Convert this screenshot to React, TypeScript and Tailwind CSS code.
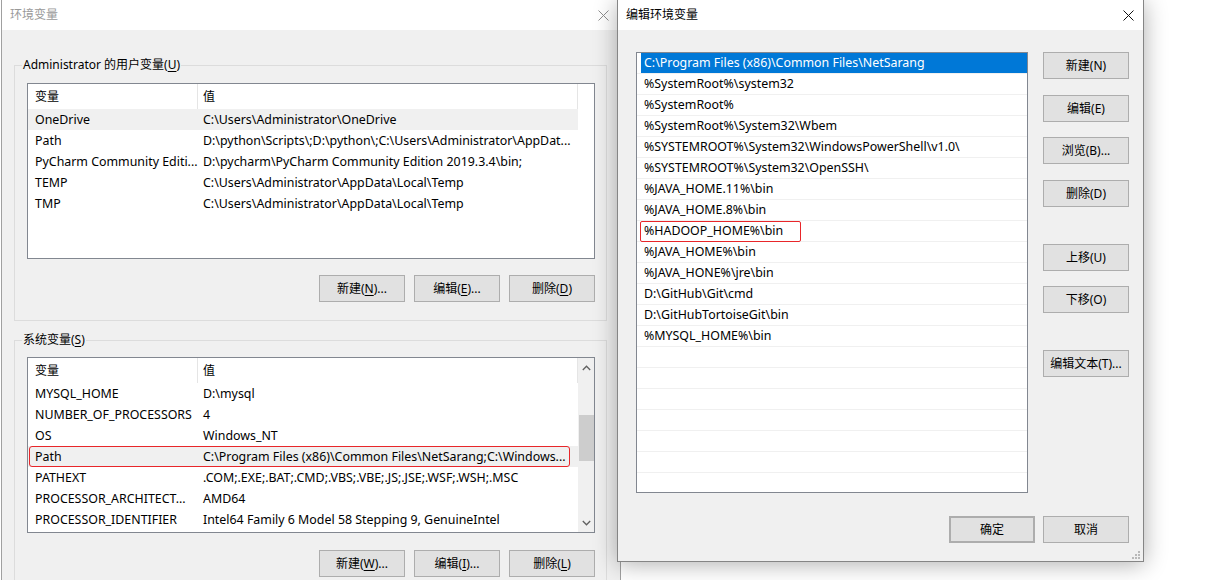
import React from "react";

const F = "font-['Noto_Sans','Noto_Sans_CJK_SC',sans-serif]";

function U({ children }: { children: React.ReactNode }) {
  return <span className="underline underline-offset-[2px] decoration-[1px]">{children}</span>;
}

function Btn({ children, className = "" }: { children: React.ReactNode; className?: string }) {
  return (
    <div
      className={`h-[27px] w-[86px] shrink-0 bg-[#e1e1e1] border border-[#adadad] flex items-center justify-center text-[12px] text-black ${className}`}
    >
      {children}
    </div>
  );
}

function CloseX({ color }: { color: string }) {
  return (
    <svg width="11" height="11" viewBox="0 0 11 11">
      <path d="M0.5 0.5 L10.5 10.5 M10.5 0.5 L0.5 10.5" stroke={color} strokeWidth="1" fill="none" />
    </svg>
  );
}

function Chevron({ up }: { up?: boolean }) {
  return (
    <svg width="9" height="6" viewBox="0 0 9 6">
      <path d={up ? "M0.8 5 L4.5 1.2 L8.2 5" : "M0.8 1 L4.5 4.8 L8.2 1"} stroke="#606060" strokeWidth="1.3" fill="none" />
    </svg>
  );
}

type Row = { n: string; v: string; hl?: boolean; red?: boolean };

function VarList({ rows, scroll }: { rows: Row[]; scroll?: boolean }) {
  return (
    <div className="w-[568px] h-[176px] border border-[#828790] bg-white flex overflow-hidden text-[12.4px] text-black">
      <div className="w-[550px] flex flex-col">
        <div className="h-[25px] flex shrink-0 text-[12px]">
          <div className="w-[170px] border-r border-[#e5e5e5] pl-[7px] pt-[1px] flex items-center">变量</div>
          <div className="w-[380px] border-r border-[#e5e5e5] pl-[5px] pt-[1px] flex items-center">值</div>
        </div>
        {rows.map((r, i) => (
          <div key={i} className={`relative h-[21px] flex items-center shrink-0 pt-[1px] ${r.hl ? "bg-[#f0f0f0]" : ""}`}>
            <div className="w-[170px] pl-[7px] whitespace-nowrap overflow-hidden">{r.n}</div>
            <div className="w-[380px] pl-[5px] whitespace-nowrap overflow-hidden">{r.v}</div>
            {r.red && (
              <div className="absolute left-[1px] right-[8px] top-0 bottom-0 border border-[#e8262a] rounded-[3px]" />
            )}
          </div>
        ))}
      </div>
      {scroll ? (
        <div className="w-[16px] bg-[#f0f0f0] flex flex-col items-center">
          <div className="h-[20px] flex items-center justify-center">
            <Chevron up />
          </div>
          <div className="mt-[37px] h-[46px] w-[15px] bg-[#cdcdcd]" />
          <div className="flex-1" />
          <div className="h-[18px] flex items-center justify-center">
            <Chevron />
          </div>
        </div>
      ) : (
        <div className="w-[16px]" />
      )}
    </div>
  );
}

const userRows: Row[] = [
  { n: "OneDrive", v: "C:\\Users\\Administrator\\OneDrive", hl: true },
  { n: "Path", v: "D:\\python\\Scripts\\;D:\\python\\;C:\\Users\\Administrator\\AppDat..." },
  { n: "PyCharm Community Editi...", v: "D:\\pycharm\\PyCharm Community Edition 2019.3.4\\bin;" },
  { n: "TEMP", v: "C:\\Users\\Administrator\\AppData\\Local\\Temp" },
  { n: "TMP", v: "C:\\Users\\Administrator\\AppData\\Local\\Temp" },
];

const sysRows: Row[] = [
  { n: "MYSQL_HOME", v: "D:\\mysql" },
  { n: "NUMBER_OF_PROCESSORS", v: "4" },
  { n: "OS", v: "Windows_NT" },
  { n: "Path", v: "C:\\Program Files (x86)\\Common Files\\NetSarang;C:\\Windows...", hl: true, red: true },
  { n: "PATHEXT", v: ".COM;.EXE;.BAT;.CMD;.VBS;.VBE;.JS;.JSE;.WSF;.WSH;.MSC" },
  { n: "PROCESSOR_ARCHITECT...", v: "AMD64" },
  { n: "PROCESSOR_IDENTIFIER", v: "Intel64 Family 6 Model 58 Stepping 9, GenuineIntel" },
];

const pathItems = [
  "C:\\Program Files (x86)\\Common Files\\NetSarang",
  "%SystemRoot%\\system32",
  "%SystemRoot%",
  "%SystemRoot%\\System32\\Wbem",
  "%SYSTEMROOT%\\System32\\WindowsPowerShell\\v1.0\\",
  "%SYSTEMROOT%\\System32\\OpenSSH\\",
  "%JAVA_HOME.11%\\bin",
  "%JAVA_HOME.8%\\bin",
  "%HADOOP_HOME%\\bin",
  "%JAVA_HOME%\\bin",
  "%JAVA_HONE%\\jre\\bin",
  "D:\\GitHub\\Git\\cmd",
  "D:\\GitHubTortoiseGit\\bin",
  "%MYSQL_HOME%\\bin",
];

function GroupBox({ label, children, className = "" }: { label: React.ReactNode; children: React.ReactNode; className?: string }) {
  return (
    <div className={`relative w-[593px] border border-[#dcdcdc] pl-[12px] pr-[10px] ${className}`}>
      <div className="absolute -top-[10px] left-[7px] bg-[#f0f0f0] px-[1px] text-[12px] text-black leading-[18px] whitespace-nowrap">
        {label}
      </div>
      {children}
    </div>
  );
}

export default function App() {
  const rows = Array.from({ length: 21 }, (_, i) => pathItems[i] ?? "");
  return (
    <div className={`relative w-[1222px] h-[580px] bg-white overflow-hidden ${F}`}>
      {/* Left window: 环境变量 */}
      <div className="absolute left-[1px] top-0 w-[620px] h-[620px] bg-[#f0f0f0] border-l border-r border-[#a0a0a0]">
        <div className="h-[30px] bg-white flex items-center justify-between pl-[8px] pr-[11px]">
          <span className="text-[12px] text-[#999999]">环境变量</span>
          <CloseX color="#8e8e8e" />
        </div>
        <div className="pl-[12px]">
          <GroupBox
            className="mt-[35px] pt-[17px] pb-[18px]"
            label={
              <>
                Administrator 的用户变量(<U>U</U>)
              </>
            }
          >
            <VarList rows={userRows} />
            <div className="mt-[16px] w-[568px] flex justify-end gap-[9px]">
              <Btn>
                新建(<U>N</U>)...
              </Btn>
              <Btn>
                编辑(<U>E</U>)...
              </Btn>
              <Btn>
                删除(<U>D</U>)
              </Btn>
            </div>
          </GroupBox>
          <GroupBox
            className="mt-[19px] pt-[16px] pb-[18px]"
            label={
              <>
                系统变量(<U>S</U>)
              </>
            }
          >
            <VarList rows={sysRows} scroll />
            <div className="mt-[17px] w-[568px] flex justify-end gap-[9px]">
              <Btn>
                新建(<U>W</U>)...
              </Btn>
              <Btn>
                编辑(<U>I</U>)...
              </Btn>
              <Btn>
                删除(<U>L</U>)
              </Btn>
            </div>
          </GroupBox>
        </div>
      </div>

      {/* Right window: 编辑环境变量 */}
      <div className="absolute left-[617px] top-0 w-[527px] h-[562px] bg-[#f0f0f0] border-x border-b border-[#858585] shadow-[0_2px_22px_rgba(0,0,0,0.32)]">
        <div className="h-[30px] bg-white flex items-center justify-between pl-[8px] pr-[9px]">
          <span className="text-[12px] text-black">编辑环境变量</span>
          <CloseX color="#111111" />
        </div>
        <div className="pl-[18px] pr-[14px] pt-[22px]">
          <div className="flex">
            <div className="w-[392px] h-[441px] border border-[#828790] bg-white overflow-hidden text-[12.4px] text-black">
              {rows.map((t, i) => (
                <div key={i} className="relative h-[21px] border-b border-[#f0f0f0] pl-[4px] flex">
                  <div className={`flex-1 flex items-center pl-[3px] pt-[1px] whitespace-nowrap ${i === 0 ? "bg-[#0078d7] text-white" : ""}`}>
                    {t}
                  </div>
                  {i === 8 && (
                    <div className="absolute left-[3px] top-0 w-[161px] h-[21px] border border-[#e8262a] rounded-[2px]" />
                  )}
                </div>
              ))}
            </div>
            <div className="ml-[15px] flex flex-col">
              <Btn>新建(N)</Btn>
              <Btn className="mt-[16px]">编辑(E)</Btn>
              <Btn className="mt-[15px]">浏览(B)...</Btn>
              <Btn className="mt-[16px]">删除(D)</Btn>
              <Btn className="mt-[37px]">上移(U)</Btn>
              <Btn className="mt-[15px]">下移(O)</Btn>
              <Btn className="mt-[37px]">编辑文本(T)...</Btn>
            </div>
          </div>
          <div className="mt-[23px] flex justify-end gap-[8px]">
            <Btn className="border-2 border-[#0078d7]">确定</Btn>
            <Btn>取消</Btn>
          </div>
        </div>
        <svg className="absolute right-[3px] bottom-[2px]" width="9" height="9" viewBox="0 0 9 9">
          <rect x="7" y="1" width="2" height="2" fill="#b8b8b8" />
          <rect x="4" y="4" width="2" height="2" fill="#b8b8b8" />
          <rect x="7" y="4" width="2" height="2" fill="#b8b8b8" />
          <rect x="1" y="7" width="2" height="2" fill="#b8b8b8" />
          <rect x="4" y="7" width="2" height="2" fill="#b8b8b8" />
          <rect x="7" y="7" width="2" height="2" fill="#b8b8b8" />
        </svg>
      </div>
    </div>
  );
}
